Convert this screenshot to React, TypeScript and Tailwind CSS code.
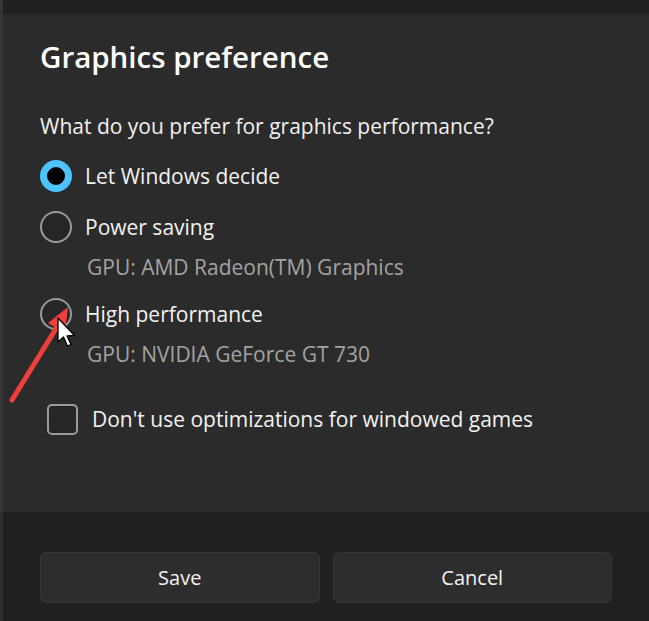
import React from "react";

const font = { fontFamily: '"Open Sans", "Noto Sans", Arial, sans-serif' };

function Radio({ selected }: { selected?: boolean }) {
  if (selected) {
    return (
      <div className="w-8 h-8 rounded-full bg-[#4cc2ff] flex items-center justify-center flex-shrink-0">
        <div className="w-[18px] h-[18px] rounded-full bg-black" />
      </div>
    );
  }
  return <div className="w-8 h-8 rounded-full border-2 border-[#9a9a9a] bg-[#262626] flex-shrink-0" />;
}

function Option({ label, selected }: { label: string; selected?: boolean }) {
  return (
    <div className="flex items-center gap-[13px] h-8">
      <Radio selected={selected} />
      <span className="text-[21px] text-[#f2f2f2] leading-none">{label}</span>
    </div>
  );
}

function Sub({ children }: { children: React.ReactNode }) {
  return (
    <div className="pl-[47px] h-6 flex items-center text-[21px] text-[#a3a3a3]">{children}</div>
  );
}

export default function App() {
  return (
    <div className="relative w-[649px] h-[621px] flex flex-col bg-[#202020] overflow-hidden" style={font}>
      <div className="h-[14px] bg-[#202020] border-l-[3px] border-[#353535]" />
      <div className="flex-1 bg-[#2b2b2b] border-l-[3px] border-[#353535] pl-[37px] pt-[25px] flex flex-col">
        <h1 className="text-[29.5px] font-semibold text-white h-9 leading-9">Graphics preference</h1>
        <p className="mt-[37px] h-7 leading-7 text-[21px] text-[#f0f0f0]">
          What do you prefer for graphics performance?
        </p>
        <div className="mt-5">
          <Option label="Let Windows decide" selected />
        </div>
        <div className="mt-[19px]">
          <Option label="Power saving" />
        </div>
        <div className="mt-[13px]">
          <Sub>GPU: AMD Radeon(TM) Graphics</Sub>
        </div>
        <div className="mt-[18px]">
          <Option label="High performance" />
        </div>
        <div className="mt-[13px]">
          <Sub>GPU: NVIDIA GeForce GT 730</Sub>
        </div>
        <div className="mt-[37px] pl-[7px] flex items-center gap-[14px]">
          <div className="w-[31px] h-[31px] rounded-[5px] border-2 border-[#9a9a9a] bg-[#262626]" />
          <span className="text-[21px] text-[#f2f2f2]">Don't use optimizations for windowed games</span>
        </div>
      </div>
      <div className="h-[109px] bg-[#202020] border-l-[3px] border-[#2e2e2e] pl-[37px] pr-[37px] pt-[40px] flex gap-[13px]">
        <button className="w-[280px] h-[51px] rounded-[6px] bg-[#2d2d2d] border border-[#353535] text-[20px] text-[#f2f2f2]">
          Save
        </button>
        <button className="w-[280px] h-[51px] rounded-[6px] bg-[#2d2d2d] border border-[#353535] text-[20px] text-[#f2f2f2]">
          Cancel
        </button>
      </div>

      <svg className="absolute left-0 top-0 pointer-events-none" width="649" height="621">
        <line x1="12" y1="400" x2="57" y2="327" stroke="#ee3f3a" strokeWidth="5" strokeLinecap="round" />
        <polygon points="68,307 48,323 65,333" fill="#ee3f3a" />
        <path
          d="M58 318 L58 342 L63.5 337 L67.5 346 L71 344.5 L67 336 L74.5 335.5 Z"
          fill="#ffffff"
          stroke="#000000"
          strokeWidth="1.3"
          strokeLinejoin="round"
        />
      </svg>
    </div>
  );
}
